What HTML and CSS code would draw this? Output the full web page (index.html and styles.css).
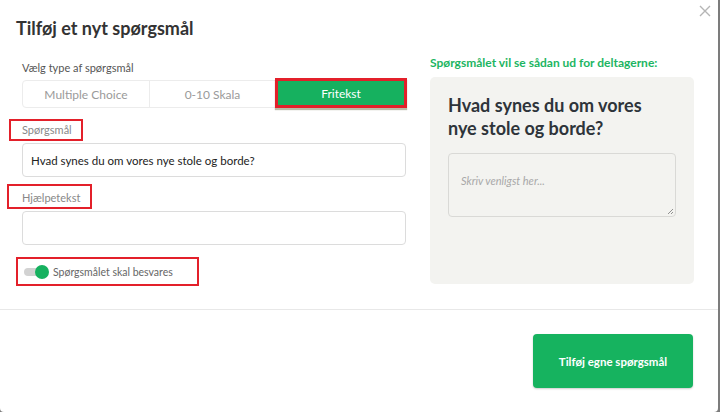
FILE: index.html
```html
<!DOCTYPE html>
<html lang="da">
<head>
<meta charset="utf-8">
<title>Tilføj et nyt spørgsmål</title>
<link rel="stylesheet" href="styles.css">
</head>
<body>
<div class="modal">
  <button class="close" aria-label="Luk">
    <svg width="12" height="12" viewBox="0 0 12 12"><path d="M1 1L11 11M11 1L1 11" stroke="#b5b5b5" stroke-width="1.4" fill="none"/></svg>
  </button>
  <h1 class="title">Tilføj et nyt spørgsmål</h1>
  <div class="body">
    <div class="left">
      <div class="type-label">Vælg type af spørgsmål</div>
      <div class="segments">
        <div class="seg">Multiple Choice</div>
        <div class="seg">0-10 Skala</div>
        <div class="seg seg-active"><span class="seg-inner">Fritekst</span></div>
      </div>
      <div class="field-label"><span class="mark mark-q">Spørgsmål</span></div>
      <div class="input">Hvad synes du om vores nye stole og borde?</div>
      <div class="field-label field-label-2"><span class="mark mark-h">Hjælpetekst</span></div>
      <div class="input"></div>
      <div class="toggle-row">
        <span class="mark mark-t">
          <span class="toggle"><span class="knob"></span></span>
          <span class="toggle-text">Spørgsmålet skal besvares</span>
        </span>
      </div>
    </div>
    <div class="right">
      <div class="preview-label">Spørgsmålet vil se sådan ud for deltagerne:</div>
      <div class="card">
        <div class="card-q">Hvad synes du om vores nye stole og borde?</div>
        <div class="textarea">
          <span class="placeholder">Skriv venligst her...</span>
          <svg class="grip" width="8" height="8" viewBox="0 0 8 8"><path d="M7 2L2 7M7 5L5 7" stroke="#777" stroke-width="0.8"/></svg>
        </div>
      </div>
    </div>
  </div>
  <div class="footer">
    <button class="primary">Tilføj egne spørgsmål</button>
  </div>
</div>
</body>
</html>
```
FILE: styles.css
```css
* { box-sizing: border-box; }
html, body { margin: 0; padding: 0; }
body {
  background: #7c7c7c;
  width: 720px;
  height: 412px;
  overflow: hidden;
  font-family: Lato, "Open Sans", sans-serif;
}
.modal {
  position: relative;
  width: 718px;
  height: 412px;
  background: #fff;
  border-radius: 0 0 4px 4px;
}
.close {
  position: absolute;
  top: 4px;
  right: 6px;
  border: 0;
  background: none;
  padding: 0;
  width: 14px;
  height: 14px;
  display: flex;
  align-items: center;
  justify-content: center;
}
.title {
  margin: 0;
  padding: 16px 0 0 16px;
  height: 54px;
  font-size: 18px;
  font-weight: 700;
  color: #333;
  line-height: 24px;
}
.body {
  display: flex;
  gap: 24px;
  padding: 0 24px 0 22px;
  height: 255px;
}
.left { width: 384px; }
.right { width: 264px; }
.type-label {
  font-size: 11px;
  color: #555;
  line-height: 14px;
  margin-top: 7px;
}
.segments {
  display: flex;
  margin-top: 5px;
  height: 28px;
  border: 1px solid #ececec;
  border-radius: 4px;
}
.seg {
  flex: 1 1 0;
  display: flex;
  align-items: center;
  justify-content: center;
  font-size: 12px;
  color: #9a9a9a;
  border-right: 1px solid #ececec;
}
.seg:nth-child(1) { flex-basis: 127px; flex-grow: 0; }
.seg:nth-child(2) { flex-basis: 126px; flex-grow: 0; }
.seg-active {
  border-right: 0;
  position: relative;
}
.seg-inner {
  position: absolute;
  left: -1px;
  right: -2px;
  top: -3px;
  bottom: -1px;
  display: flex;
  align-items: center;
  justify-content: center;
  background: #16b15f;
  color: #fff;
  border: 3px solid #e3202a;
  box-shadow: 0 2px 1px rgba(60,60,0,0.35);
}
.field-label {
  margin-top: 11px;
  height: 22px;
  font-size: 11px;
  color: #888;
}
.field-label-2 { margin-top: 7px; height: 25px; }
.mark {
  display: inline-flex;
  align-items: center;
  height: 100%;
  border: 2px solid #e3202a;
}
.mark-q { margin-left: -13px; padding: 0 10px 2px 11px; width: 74px; }
.mark-h { margin-left: -15px; padding: 2px 10px 0 13px; width: 85px; }
.input {
  height: 34px;
  border: 1px solid #dcdcdc;
  border-radius: 4px;
  font-size: 11.5px;
  color: #222;
  padding: 0 8px;
  display: flex;
  align-items: center;
  margin-top: 2px;
}
.toggle-row {
  margin-top: 12px;
  height: 29px;
}
.mark-t {
  margin-left: -6px;
  width: 183px;
  padding: 0 0 0 6px;
  gap: 4px;
}
.toggle {
  position: relative;
  width: 24px;
  height: 8px;
  border-radius: 4px;
  background: #d2d2d2;
  display: inline-block;
}
.knob {
  position: absolute;
  right: -1px;
  top: -3px;
  width: 14px;
  height: 14px;
  border-radius: 50%;
  background: #16b15f;
}
.toggle-text {
  font-size: 10.5px;
  color: #666;
  margin-left: 1px;
}
.preview-label {
  margin-top: 2px;
  font-size: 12px;
  font-weight: 700;
  color: #1cb562;
  line-height: 14px;
}
.card {
  margin-top: 7px;
  height: 207px;
  background: #f3f3f0;
  border-radius: 5px;
  padding: 17px 18px 0 18px;
}
.card-q {
  font-size: 18px;
  font-weight: 700;
  color: #2e343a;
  line-height: 23px;
  width: 210px;
}
.textarea {
  position: relative;
  margin-top: 13px;
  height: 64px;
  border: 1px solid #d9d9d6;
  border-radius: 4px;
  padding: 15px 12px;
}
.placeholder {
  font-size: 11px;
  font-style: italic;
  color: #a8a8a8;
}
.grip {
  position: absolute;
  right: 1px;
  bottom: 1px;
}
.footer {
  border-top: 1px solid #e8e8e8;
  display: flex;
  justify-content: flex-end;
  padding: 24px 25px 0 0;
}
.primary {
  width: 160px;
  height: 54px;
  border: 0;
  border-radius: 4px;
  background: #16b35f;
  color: #fff;
  font-family: Lato, sans-serif;
  font-size: 11.5px;
  font-weight: 700;
  box-shadow: 0 1px 2px rgba(0,0,0,0.2);
}
```
